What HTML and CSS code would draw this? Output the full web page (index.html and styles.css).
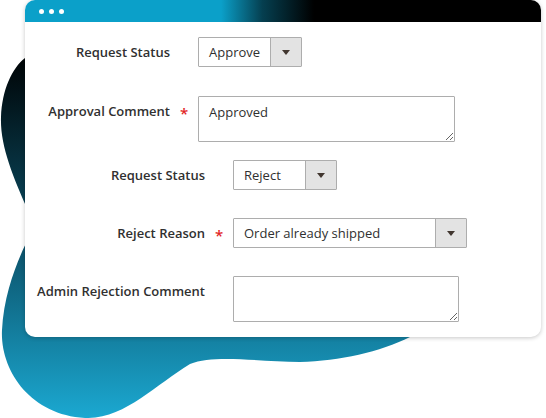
FILE: index.html
```html
<!DOCTYPE html>
<html lang="en">
<head>
<meta charset="utf-8">
<title>Request Status</title>
<link rel="stylesheet" href="styles.css">
</head>
<body>
<div class="stage">
  <svg class="blob" width="546" height="418" viewBox="0 0 546 418" aria-hidden="true">
    <defs>
      <linearGradient id="blobGrad" gradientUnits="userSpaceOnUse" x1="0" y1="60" x2="0" y2="418">
        <stop offset="0" stop-color="#000507"/>
        <stop offset="0.5" stop-color="#0b4f66"/>
        <stop offset="1" stop-color="#1ba8d1"/>
      </linearGradient>
    </defs>
    <path fill="url(#blobGrad)" d="M 25 58 C 12 68, 2 90, 1 117 C 0 145, 12 175, 30 215 L 30 235 C 20 255, 4 290, 2 330 C 0 370, 30 415, 85 418 C 125 419, 155 385, 190 364 C 215 354, 260 362, 300 362 C 340 361, 380 352, 410 337 L 410 60 Z"/>
  </svg>
  <div class="window">
    <div class="titlebar">
      <span class="dot"></span><span class="dot"></span><span class="dot"></span>
    </div>
    <div class="content">
      <div class="group group-a">
        <div class="label">Request Status</div>
        <div class="req"></div>
        <div class="select w104"><span class="value">Approve</span><span class="btn"><span class="tri"></span></span></div>

        <div class="label row-gap-29">Approval Comment</div>
        <div class="req row-gap-29">*</div>
        <textarea class="area area-a row-gap-29">Approved</textarea>
      </div>
      <div class="group group-b">
        <div class="label row-gap-18">Request Status</div>
        <div class="req row-gap-18"></div>
        <div class="select w104 row-gap-18"><span class="value">Reject</span><span class="btn"><span class="tri"></span></span></div>

        <div class="label row-gap-28">Reject Reason</div>
        <div class="req row-gap-28">*</div>
        <div class="select w234 row-gap-28"><span class="value">Order already shipped</span><span class="btn"><span class="tri"></span></span></div>

        <div class="label row-gap-28">Admin Rejection Comment</div>
        <div class="req row-gap-28"></div>
        <textarea class="area area-b row-gap-28"></textarea>
      </div>
    </div>
  </div>
</div>
</body>
</html>
```
FILE: styles.css
```css
html, body {
  margin: 0;
  padding: 0;
  background: #ffffff;
}
body {
  font-family: "Open Sans", "Noto Sans", sans-serif;
  color: #303030;
}
.stage {
  position: relative;
  width: 546px;
  height: 418px;
  overflow: hidden;
}
.blob {
  position: absolute;
  left: 0;
  top: 0;
}
.window {
  position: relative;
  margin-left: 25px;
  width: 516px;
  height: 337px;
  background: #ffffff;
  border-radius: 10px;
  box-shadow: 0 1px 4px rgba(0, 0, 0, 0.22);
  overflow: hidden;
}
.titlebar {
  height: 22px;
  background: linear-gradient(90deg, #0ba0c9 0%, #0ba0c9 38%, #053f50 46%, #000000 56%, #000000 100%);
  display: flex;
  align-items: center;
  padding-left: 14px;
  gap: 5px;
}
.dot {
  width: 5px;
  height: 5px;
  border-radius: 50%;
  background: #ffffff;
}
.content {
  padding-top: 15px;
}
.group {
  display: grid;
  align-items: start;
}
.group-a {
  grid-template-columns: 145px 28px auto;
}
.group-b {
  grid-template-columns: 180px 28px auto;
}
.label {
  font-size: 13px;
  font-weight: 600;
  line-height: 18px;
  padding-top: 6px;
  text-align: right;
  color: #303030;
}
.req {
  font-size: 15px;
  font-weight: 600;
  line-height: 18px;
  padding-top: 8px;
  text-align: center;
  color: #e22626;
}
.row-gap-29 { margin-top: 29px; }
.row-gap-28 { margin-top: 28px; }
.row-gap-18 { margin-top: 18px; }
.select {
  box-sizing: border-box;
  height: 30px;
  border: 1px solid #adadad;
  border-radius: 1px;
  display: flex;
  align-items: stretch;
  background: #ffffff;
  justify-self: start;
}
.w104 { width: 104px; }
.w234 { width: 234px; }
.value {
  flex: 1;
  font-size: 13px;
  line-height: 28px;
  padding-left: 10px;
  color: #303030;
}
.btn {
  width: 30px;
  border-left: 1px solid #adadad;
  background: #e3e3e3;
  display: flex;
  align-items: center;
  justify-content: center;
}
.tri {
  width: 0;
  height: 0;
  border-left: 4px solid transparent;
  border-right: 4px solid transparent;
  border-top: 5px solid #41362f;
}
.area {
  box-sizing: border-box;
  display: block;
  margin-left: 0;
  margin-right: 0;
  margin-bottom: 0;
  border: 1px solid #adadad;
  border-radius: 1px;
  padding: 6px 10px;
  font-family: "Open Sans", "Noto Sans", sans-serif;
  font-size: 13px;
  line-height: 18px;
  color: #303030;
  background: #ffffff;
  resize: both;
  outline: none;
  justify-self: start;
}
.area-a {
  width: 257px;
  height: 46px;
}
.area-b {
  width: 226px;
  height: 46px;
}
```
